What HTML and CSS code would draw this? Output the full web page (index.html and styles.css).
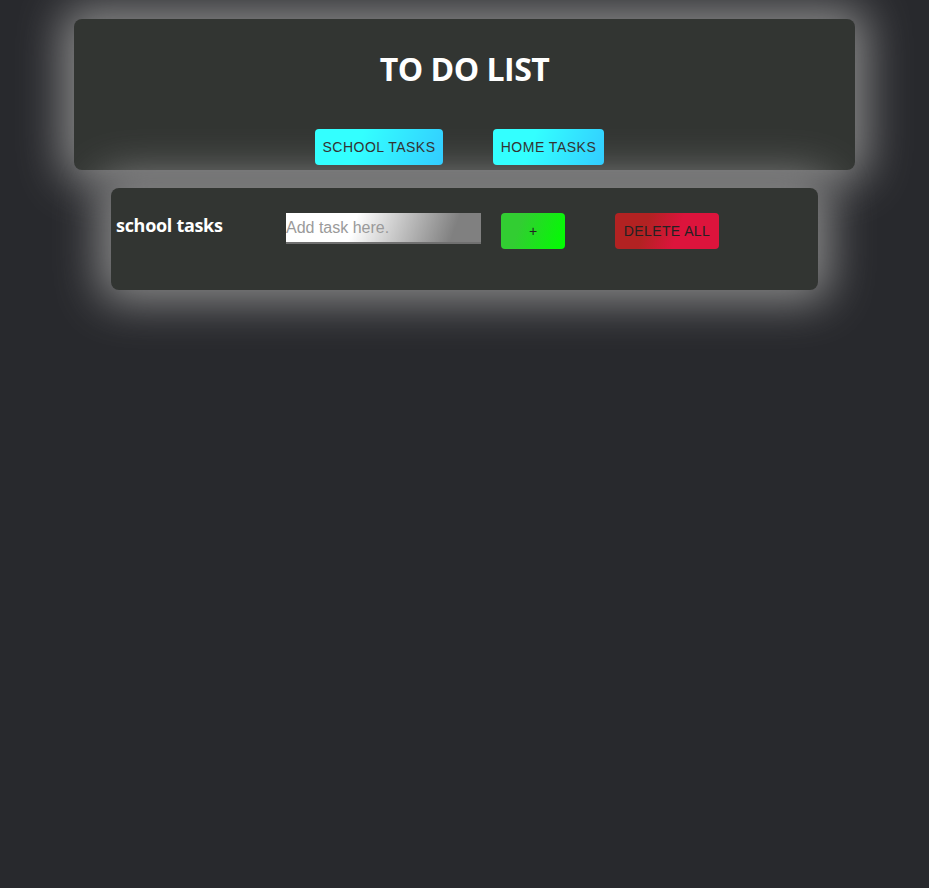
FILE: index.html
```html
<!DOCTYPE html>
<html>
<head>
<meta charset="utf-8">
<link rel="stylesheet" href="styles.css">
</head>
<body>
<div class="header-card">
  <h1 class="title">TO DO LIST</h1>
  <div class="tabs">
    <button class="tab">SCHOOL TASKS</button>
    <button class="tab">HOME TASKS</button>
  </div>
</div>
<div class="list-card">
  <div class="list-title">school tasks</div>
  <input class="task-input" type="text" placeholder="Add task here.">
  <button class="add-btn">+</button>
  <button class="delete-btn">DELETE ALL</button>
</div>
</body>
</html>
```
FILE: styles.css
```css
html, body {
  margin: 0;
  padding: 0;
  background: #28292d;
  height: 100%;
}
body {
  padding-top: 19px;
  box-sizing: border-box;
  font-family: "Open Sans", "Noto Sans", sans-serif;
}
.header-card {
  width: 781px;
  height: 151px;
  margin: 0 auto;
  background: #323532;
  border-radius: 8px;
  box-shadow: 0 0 45px 12px #8a8a8a;
  box-sizing: border-box;
  padding-top: 30px;
  display: flex;
  flex-direction: column;
  align-items: center;
}
.title {
  margin: 0;
  font-size: 32px;
  line-height: 40px;
  font-weight: 700;
  color: #ffffff;
  letter-spacing: -0.5px;
}
.tabs {
  display: flex;
  gap: 50px;
  margin-top: 40px;
  padding-right: 10px;
}
.tab {
  height: 36px;
  border: none;
  border-radius: 4px;
  padding: 0;
  background: linear-gradient(110deg, #33ffff 35%, #33ccff 100%);
  font-family: "Liberation Sans", Arial, sans-serif;
  font-size: 14px;
  color: #333333;
  letter-spacing: 0.5px;
}
.tab:first-child { width: 128px; }
.tab:last-child { width: 111px; }
.list-card {
  width: 707px;
  height: 102px;
  margin: 18px auto 0;
  background: #323532;
  border-radius: 8px;
  box-shadow: 0 0 45px 12px #8a8a8a;
  box-sizing: border-box;
  padding: 25px 5px;
  display: flex;
  align-items: flex-start;
}
.list-title {
  width: 170px;
  flex: none;
  color: #ffffff;
  font-weight: 700;
  font-size: 18px;
  line-height: 24px;
  letter-spacing: -0.3px;
}
.task-input {
  width: 195px;
  height: 31px;
  box-sizing: border-box;
  border: none;
  border-bottom: 2px solid #707070;
  padding: 0;
  margin: 0;
  background: linear-gradient(110deg, #ffffff 35%, #808080 85%);
  font-family: "Liberation Sans", Arial, sans-serif;
  font-size: 16px;
  outline: none;
}
.task-input::placeholder {
  color: #9a9a9a;
}
.add-btn {
  width: 64px;
  height: 36px;
  margin-left: 20px;
  border: none;
  border-radius: 4px;
  background: linear-gradient(110deg, #32cd32 30%, #00ff00 100%);
  font-family: "Liberation Sans", Arial, sans-serif;
  font-size: 14px;
  color: #222222;
}
.delete-btn {
  width: 104px;
  height: 36px;
  margin-left: 50px;
  border: none;
  border-radius: 4px;
  background: linear-gradient(110deg, #b22222 30%, #dc143c 60%);
  font-family: "Liberation Sans", Arial, sans-serif;
  font-size: 14px;
  color: #222222;
  letter-spacing: 0.4px;
  padding: 0;
}
```
